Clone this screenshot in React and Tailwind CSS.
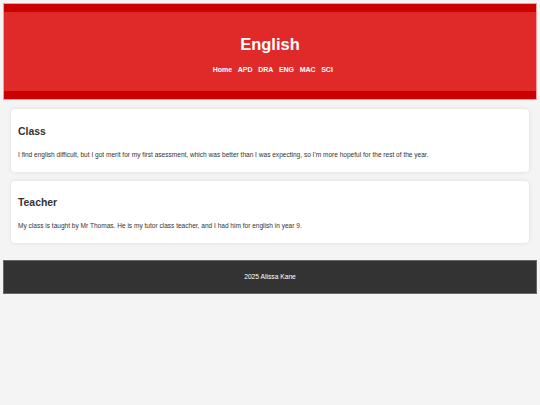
import React from "react";

const links = ["Home", "APD", "DRA", "ENG", "MAC", "SCI"];

const sections = [
  {
    title: "Class",
    text: "I find english difficult, but I got merit for my first asessment, which was better than I was expecting, so I'm more hopeful for the rest of the year.",
  },
  {
    title: "Teacher",
    text: "My class is taught by Mr Thomas. He is my tutor class teacher, and I had him for english in year 9.",
  },
];

const App = () => {
  return (
    <div className="min-h-screen bg-[#f4f4f4] p-[3px] font-['Liberation_Sans',Arial,sans-serif] text-[#333]">
      <header className="border border-[#f0a0a0]">
        <div className="border-y-8 border-[#cc0000] bg-[#e02a2a] pt-[23px] pb-[17px] text-center text-white">
          <h1 className="text-[16.5px] font-bold leading-[18px]">English</h1>
          <nav className="mt-[13px] flex justify-center text-[7px] font-bold leading-[8px]">
            {links.map((l) => (
              <a key={l} href="#" className="ml-[5.6px]">{l}</a>
            ))}
          </nav>
        </div>
      </header>

      <main className="flex flex-col gap-[9px] px-2 pt-[9px]">
        {sections.map((s) => (
          <section key={s.title} className="rounded-[4px] bg-white px-[7px] pt-[16.5px] pb-[13px] shadow-[0_0_4px_rgba(0,0,0,0.1)]">
            <h2 className="text-[10.4px] font-bold leading-[12px]">{s.title}</h2>
            <p className="mt-[13px] text-[6.55px] leading-[8px]">{s.text}</p>
          </section>
        ))}
      </main>

      <footer className="mt-[17px] border border-[#666] bg-[#333] py-[12px] text-center text-[6.7px] leading-[8px] text-white">
        2025 Alissa Kane
      </footer>
    </div>
  );
};

export default App;
